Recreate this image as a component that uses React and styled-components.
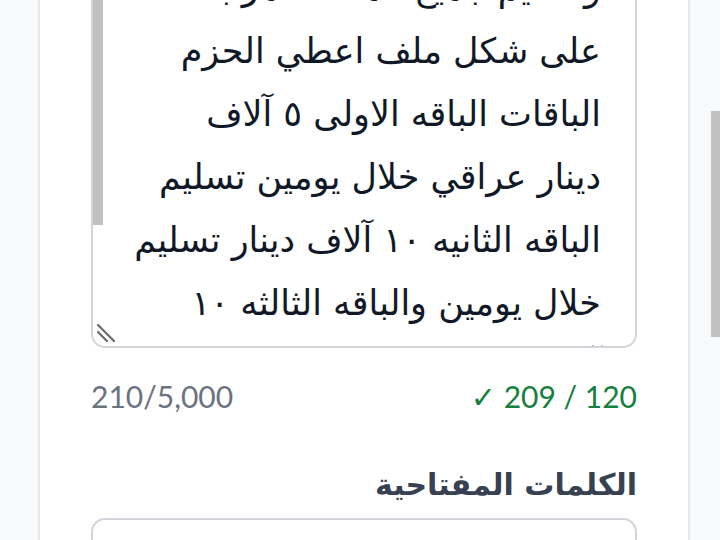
import React, { useLayoutEffect, useRef } from "react";
import styled, { createGlobalStyle } from "styled-components";

const GlobalStyle = createGlobalStyle`
  html, body {
    margin: 0;
    padding: 0;
    overflow: hidden;
    background: #f8f9fa;
  }
  * {
    box-sizing: border-box;
  }
`;

const Viewport = styled.div`
  height: 100vh;
  overflow-y: scroll;
  background: #f8f9fa;
  scrollbar-width: none;
`;

// the page scroll thumb, drawn over the right edge
const PageThumb = styled.div`
  position: fixed;
  right: 0;
  top: 111px;
  width: 9px;
  height: 226px;
  background: #c1c1c1;
`;

const Page = styled.div`
  min-height: 1290px;
  padding: 30px 30px 40px 38px;
`;

const Card = styled.div`
  direction: rtl;
  background: #ffffff;
  border: 2px solid #e5e7eb;
  border-radius: 14px;
  padding: 40px 51px 60px;
  display: flex;
  flex-direction: column;
`;

const Label = styled.label`
  display: block;
  font-family: "DejaVu Sans", sans-serif;
  font-weight: bold;
  font-size: 30px;
  line-height: 45px;
  color: #374151;
  margin-bottom: ${(props) => props.gap || "11px"};
`;

const AreaWrap = styled.div`
  position: relative;
`;

const TextArea = styled.textarea`
  display: block;
  direction: rtl;
  width: 100%;
  height: 454px;
  padding: 16px 34px 16px 16px;
  border: 2px solid #d1d5db;
  border-radius: 14px;
  background: #ffffff;
  color: #111827;
  font-family: "DejaVu Sans", sans-serif;
  font-size: 35px;
  line-height: 63px;
  white-space: pre;
  overflow-x: hidden;
  overflow-y: scroll;
  scrollbar-width: none;
  resize: none;
  outline: none;
`;

const AreaThumb = styled.div`
  position: absolute;
  left: 2px;
  top: 100px;
  width: 10px;
  height: 231px;
  background: #c1c1c1;
`;

const Grip = styled.svg`
  position: absolute;
  left: 6px;
  bottom: 6px;
  width: 18px;
  height: 18px;
`;

const CounterRow = styled.div`
  display: flex;
  justify-content: space-between;
  align-items: center;
  margin-top: 28px;
  font-family: Lato, "DejaVu Sans", sans-serif;
  font-size: 30px;
  line-height: 40px;
`;

const Counter = styled.span`
  direction: ltr;
  color: ${(props) => (props.valid ? "#15803d" : "#6b7280")};
`;

const Field = styled.div`
  margin-top: ${(props) => props.top || "0"};
`;

const Input = styled.input`
  direction: rtl;
  width: 100%;
  height: 72px;
  padding: 0 24px;
  border: 2px solid #d1d5db;
  border-radius: 14px;
  background: #ffffff;
  font-family: "DejaVu Sans", sans-serif;
  font-size: 30px;
  color: #111827;
  outline: none;
`;

const Hint = styled.p`
  margin: 14px 0 0;
  font-family: "DejaVu Sans", sans-serif;
  font-size: 24px;
  line-height: 36px;
  color: #6b7280;
`;

const lines = [
  "مطلوب مصمم لتصميم منشورات",
  "لصفحة المتجر على انستغرام",
  "وفيسبوك مع شعار بسيط وهوية",
  "بصرية متناسقة لكل التصاميم",
  "وتسليم جميع الملفات مرتبة",
  "على شكل ملف اعطي الحزم",
  "الباقات الباقه الاولى ٥ آلاف",
  "دينار عراقي خلال يومين تسليم",
  "الباقه الثانيه ١٠ آلاف دينار تسليم",
  "خلال يومين والباقه الثالثه ١٠",
  "آلاف دينار تسليم خلال ثلاثة ايام",
  "مع تعديلات مجانية حسب الطلب",
  "والتواصل يكون عبر الموقع فقط",
  "شكرا لكم",
];

const App = () => {
  const viewportRef = useRef(null);
  const areaRef = useRef(null);

  useLayoutEffect(() => {
    const vp = viewportRef.current;
    const ta = areaRef.current;
    if (!vp || !ta) return;
    const rect = ta.getBoundingClientRect();
    vp.scrollTop += rect.bottom - 348;
    ta.scrollTop = 207;
  }, []);

  return (
    <>
      <GlobalStyle />
      <Viewport ref={viewportRef}>
        <Page>
          <Card>
            <Label htmlFor="desc" gap="42px">
              وصف الخدمة
            </Label>
            <AreaWrap>
              <TextArea
                id="desc"
                ref={areaRef}
                wrap="off"
                defaultValue={lines.join("\n")}
              />
              <AreaThumb />
              <Grip viewBox="0 0 18 18">
                <path
                  d="M1 1 L17 17 M1 8 L10 17"
                  stroke="#6b6b6b"
                  strokeWidth="2.2"
                  strokeLinecap="round"
                />
              </Grip>
            </AreaWrap>
            <CounterRow>
              <Counter valid>✓ 209 / 120</Counter>
              <Counter>210/5,000</Counter>
            </CounterRow>
            <Field top="46px">
              <Label htmlFor="keywords">الكلمات المفتاحية</Label>
              <Input id="keywords" type="text" />
              <Hint>افصل بين الكلمات بفاصلة</Hint>
            </Field>
          </Card>
        </Page>
      </Viewport>
      <PageThumb />
    </>
  );
};

export default App;
